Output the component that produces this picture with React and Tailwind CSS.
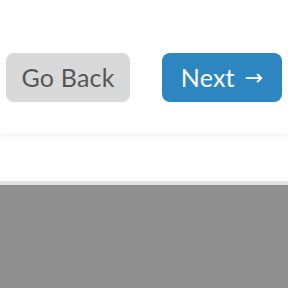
export default function App() {
  return (
    <div className="w-[288px] h-[288px] overflow-hidden bg-white flex flex-col" style={{fontFamily: 'Lato, "Open Sans", sans-serif'}}>
      <div className="h-[134px] shrink-0 flex items-start justify-between pt-[53px] pl-[6px] pr-[6px] shadow-[0_1px_3px_rgba(0,0,0,0.08)] relative z-10">
        <button className="h-[49px] w-[124px] rounded-[8px] bg-[#d9d9d9] text-[#575757] text-[25px] leading-none flex items-center justify-center tracking-[0.2px]">Go Back</button>
        <button className="h-[49px] w-[120px] rounded-[8px] bg-[#2e86c1] text-white text-[25px] leading-none flex items-center justify-center">
          <span className="tracking-[0.2px]">Next</span>
          <span className="ml-[10px] text-[22px] leading-none" style={{fontFamily: '"DejaVu Sans", sans-serif'}}>→</span>
        </button>
      </div>
      <div className="h-[47px] shrink-0 bg-white"></div>
      <div className="h-[4px] shrink-0 bg-[#e3e3e3]"></div>
      <div className="flex-1 bg-[#8f8f8f]"></div>
    </div>
  );
}
